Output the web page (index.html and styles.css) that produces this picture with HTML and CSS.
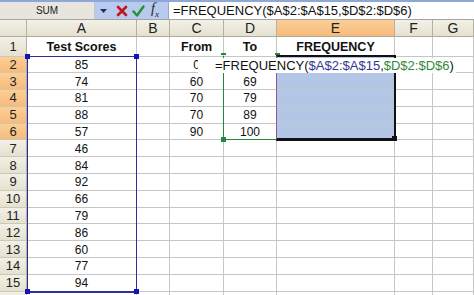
FILE: index.html
```html
<!DOCTYPE html>
<html lang="en">
  <head>
    <meta charset="UTF-8" />
    <title>FREQUENCY</title>
    <link rel="stylesheet" href="styles.css">
  </head>

  <body>
    <div class="formula-bar">
      <div class="name-box">SUM</div>
      <div class="tools">
        <svg class="drop" width="9" height="6" viewBox="0 0 9 6"><path d="M1 1h7L4.5 5z" fill="#1d2f66"/></svg>
        <svg class="cancel" width="12" height="12" viewBox="0 0 12 12"><path d="M2 2l8 8M10 2l-8 8" stroke="#c4151c" stroke-width="2.6" stroke-linecap="round"/></svg>
        <svg class="enter" width="13" height="12" viewBox="0 0 13 12"><path d="M1.5 6.5l3.5 4L11.5 1.5" stroke="#27912f" stroke-width="2.4" fill="none" stroke-linecap="round" stroke-linejoin="round"/></svg>
        <span class="fx"><i>f</i><sub>x</sub></span>
      </div>
      <div class="formula-input">=FREQUENCY($A$2:$A$15,$D$2:$D$6)</div>
    </div>

    <div class="sheet">
      <div class="corner"></div>
      <div class="ch">A</div><div class="ch">B</div><div class="ch">C</div><div class="ch">D</div>
      <div class="ch on">E</div><div class="ch">F</div><div class="ch">G</div>

      <div class="rh">1</div>
      <div class="c b">Test Scores</div><div class="c"></div><div class="c b">From</div><div class="c b">To</div>
      <div class="c b">FREQUENCY</div><div class="c"></div><div class="c"></div>

      <div class="rh on">2</div>
      <div class="c">85</div><div class="c"></div><div class="c">0</div><div class="c"></div>
      <div class="c fill"></div><div class="c"></div><div class="c"></div>

      <div class="rh on">3</div>
      <div class="c">74</div><div class="c"></div><div class="c">60</div><div class="c">69</div>
      <div class="c fill"></div><div class="c"></div><div class="c"></div>

      <div class="rh on">4</div>
      <div class="c">81</div><div class="c"></div><div class="c">70</div><div class="c">79</div>
      <div class="c fill"></div><div class="c"></div><div class="c"></div>

      <div class="rh on">5</div>
      <div class="c">88</div><div class="c"></div><div class="c">70</div><div class="c">89</div>
      <div class="c fill"></div><div class="c"></div><div class="c"></div>

      <div class="rh on">6</div>
      <div class="c">57</div><div class="c"></div><div class="c">90</div><div class="c">100</div>
      <div class="c fill"></div><div class="c"></div><div class="c"></div>

      <div class="rh">7</div>
      <div class="c">46</div><div class="c"></div><div class="c"></div><div class="c"></div>
      <div class="c"></div><div class="c"></div><div class="c"></div>

      <div class="rh">8</div>
      <div class="c">84</div><div class="c"></div><div class="c"></div><div class="c"></div>
      <div class="c"></div><div class="c"></div><div class="c"></div>

      <div class="rh">9</div>
      <div class="c">92</div><div class="c"></div><div class="c"></div><div class="c"></div>
      <div class="c"></div><div class="c"></div><div class="c"></div>

      <div class="rh">10</div>
      <div class="c">66</div><div class="c"></div><div class="c"></div><div class="c"></div>
      <div class="c"></div><div class="c"></div><div class="c"></div>

      <div class="rh">11</div>
      <div class="c">79</div><div class="c"></div><div class="c"></div><div class="c"></div>
      <div class="c"></div><div class="c"></div><div class="c"></div>

      <div class="rh">12</div>
      <div class="c">86</div><div class="c"></div><div class="c"></div><div class="c"></div>
      <div class="c"></div><div class="c"></div><div class="c"></div>

      <div class="rh">13</div>
      <div class="c">60</div><div class="c"></div><div class="c"></div><div class="c"></div>
      <div class="c"></div><div class="c"></div><div class="c"></div>

      <div class="rh">14</div>
      <div class="c">77</div><div class="c"></div><div class="c"></div><div class="c"></div>
      <div class="c"></div><div class="c"></div><div class="c"></div>

      <div class="rh">15</div>
      <div class="c">94</div><div class="c"></div><div class="c"></div><div class="c"></div>
      <div class="c"></div><div class="c"></div><div class="c"></div>

      <div class="rh"></div>
      <div class="c"></div><div class="c"></div><div class="c"></div><div class="c"></div>
      <div class="c"></div><div class="c"></div><div class="c"></div>

      <!-- range highlights while the formula is being edited -->
      <div class="range range-a">
        <span class="handle tl"></span><span class="handle tr"></span>
        <span class="handle bl"></span><span class="handle br"></span>
      </div>
      <div class="range range-d">
        <span class="handle tl"></span><span class="handle tr"></span>
        <span class="handle bl"></span>
      </div>
      <div class="range selection">
        <span class="handle br"></span>
      </div>
      <div class="cell-edit">=FREQUENCY(<span class="ref-a">$A$2:$A$15</span>,<span class="ref-d">$D$2:$D$6</span>)</div>
    </div>
  </body>
</html>
```

FILE: styles.css
```css
* {
  box-sizing: border-box;
}

body {
  margin: 0;
  width: 474px;
  height: 295px;
  overflow: hidden;
  background-color: #fff;
  color: #111;
  font-family: "Liberation Sans", Arial, sans-serif;
}

/* formula bar */

.formula-bar {
  display: flex;
  height: 20px;
  border-top: 2px solid #8ea7d9;
  border-bottom: 1px solid #a3a3a3;
}

.name-box {
  width: 95px;
  display: flex;
  align-items: center;
  justify-content: center;
  background-color: #e7e5dd;
  border-right: 1px solid #c6c6c6;
  font-size: 10px;
  color: #222;
}

.tools {
  width: 73px;
  display: flex;
  align-items: center;
  background-color: #b8cbef;
}

.drop {
  margin-left: 4px;
}

.cancel {
  margin-left: 8px;
}

.enter {
  margin-left: 4px;
}

.fx {
  margin-left: 6px;
  font-family: "Liberation Serif", serif;
  font-size: 14px;
  color: #222;
  line-height: 1;
}

.fx sub {
  font-size: 9px;
  font-style: italic;
}

.formula-input {
  flex: 1;
  display: flex;
  align-items: center;
  padding-left: 4px;
  font-size: 13px;
  border-left: 1px solid #9aa9c8;
}

/* grid */

.sheet {
  position: relative;
  display: grid;
  grid-template-columns: 27px 110px 33px 54px 53px 118px 38px 1fr;
  grid-template-rows: 17px 19.5px repeat(15, 16.8px);
}

.corner,
.ch,
.rh {
  display: flex;
  align-items: center;
  justify-content: center;
  background: linear-gradient(#f3f1e7, #e4e1d0);
  border-right: 1px solid #b4b1a0;
  border-bottom: 1px solid #aeab9a;
  color: #222;
}

.ch {
  font-size: 14px;
}

.rh {
  font-size: 13px;
  border-bottom-color: #cbc8b8;
}

.ch.on,
.rh.on {
  background: linear-gradient(#fbcf96, #f6bb7c);
}

.c {
  display: flex;
  align-items: center;
  justify-content: center;
  padding-top: 1px;
  border-right: 1px solid #c6c6c6;
  border-bottom: 1px solid #c6c6c6;
  font-size: 12px;
}

.c.b {
  font-weight: bold;
  font-size: 12.5px;
}

.c.fill {
  background-color: #b3c6e6;
}

/* highlighted ranges */

.range {
  position: absolute;
}

.range-a {
  grid-column: 2 / 3;
  grid-row: 3 / 17;
  top: -1px;
  bottom: -1px;
  left: 0;
  right: 0;
  border: 1px solid #2e2e9c;
  border-bottom-width: 2px;
}

.range-a .handle {
  background-color: #1414b4;
}

.range-d {
  grid-column: 5 / 6;
  grid-row: 3 / 8;
  top: -1px;
  bottom: 0;
  left: -1px;
  right: 0;
  border-left: 1px solid #23893a;
  border-bottom: 1px solid #23893a;
}

.range-d .handle {
  background-color: #23893a;
}

.selection {
  grid-column: 6 / 7;
  grid-row: 3 / 8;
  top: -2px;
  bottom: -1px;
  left: -1px;
  right: -1px;
  border-top: 2px solid #111;
  border-right: 2px solid #111;
  border-bottom: 3px solid #111;
  border-left: 1px solid #96549a;
}

.selection .handle {
  background-color: #111;
}

.handle {
  position: absolute;
  width: 5px;
  height: 5px;
}

.handle.tl {
  left: -3px;
  top: -3px;
}

.handle.tr {
  right: -3px;
  top: -3px;
}

.handle.bl {
  left: -3px;
  bottom: -3px;
}

.handle.br {
  right: -3px;
  bottom: -3px;
}

.range-d .handle.tl,
.range-d .handle.tr {
  height: 2px;
  top: -3px;
}

/* in-cell editing box */

.cell-edit {
  position: absolute;
  grid-column: 4 / 9;
  grid-row: 3 / 4;
  top: 1px;
  bottom: 0;
  left: 28px;
  right: 18px;
  display: flex;
  align-items: center;
  padding-left: 17px;
  background-color: #fff;
  font-size: 13px;
  white-space: nowrap;
}

.ref-a {
  color: #35358f;
}

.ref-d {
  color: #2f8a3a;
}
```
